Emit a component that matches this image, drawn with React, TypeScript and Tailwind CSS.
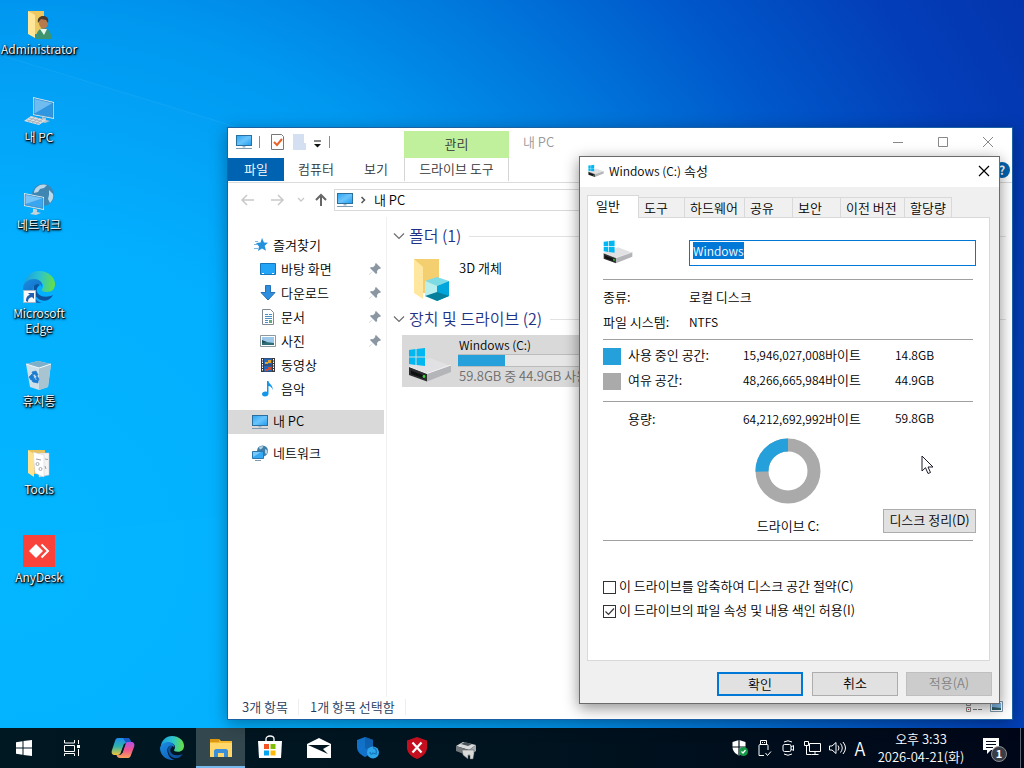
import { useEffect, useRef, useState } from 'react';
import type { ReactNode } from 'react';
import clsx from 'clsx';

type IconProps = { className?: string };

const MonitorIcon = ({ className }: IconProps) => (
  <svg viewBox="0 0 16 16" className={className} aria-hidden="true">
    <defs>
      <linearGradient id="screen" x1="0" y1="0" x2="1" y2="1">
        <stop offset="0" stopColor="#2aa5f5" />
        <stop offset="0.5" stopColor="#6cc4fb" />
        <stop offset="1" stopColor="#1e9cf0" />
      </linearGradient>
    </defs>
    <rect x="0.5" y="1.5" width="15" height="10" fill="url(#screen)" stroke="#2b6f9f" />
    <path d="M6.5 12h3v1.5h-3z" fill="#9fb4c4" />
    <path d="M0 14.5h16" stroke="#7f9bb0" strokeWidth="1" />
  </svg>
);

const NetworkIcon = ({ className }: IconProps) => (
  <svg viewBox="0 0 32 32" className={className} aria-hidden="true">
    <circle cx="20" cy="12" r="11" fill="#3f86b2" />
    <path d="M14 4c3-3 7-3 10-2l-3 3-4 1-2 3-4 1c0-3 1-4 3-6zM26 7l4 4c1 4-1 7-3 9l-2-4 1-4z" fill="#b9d9ea" />
    <path d="M1 10l20 4v13L1 23z" fill="#e3edf4" />
    <path d="M2 11.500l18 3.500v10.500L2 22z" fill="#3aa6ef" stroke="#2f78ab" strokeWidth="0.600" />
    <path d="M2.500 12l17 3.300L2.500 21z" fill="#77c4f8" />
    <path d="M10 25.500l4 1V29l4 1-5 2-6-1 3-2z" fill="#c7d1d8" />
  </svg>
);

const NetworkSmallIcon = ({ className }: IconProps) => (
  <svg viewBox="0 0 16 16" className={className} aria-hidden="true">
    <circle cx="10.500" cy="6" r="5.500" fill="#3d7fa8" />
    <path d="M7 2.500c1.500-1.500 3-1.500 4.500-1L10 3.500l-2 1zM13 4l2.500 1.500c0 2-.500 3-1.500 4l-1-2z" fill="#b5d5e6" />
    <path d="M.500 6.500h11v7H.500z" fill="#35a9f4" stroke="#2a78ae" />
    <path d="M1 7h8l-8 5z" fill="#79c8fa" />
    <path d="M3 15.500h6" stroke="#7f9bb0" />
  </svg>
);

const DriveIcon = ({ className }: IconProps) => (
  <svg viewBox="0 0 44 34" className={className} aria-hidden="true">
    <path d="M1 18l21-8 21 8-24 8z" fill="#e1e1e3" />
    <path d="M1 18.500l18 7v8L1 27z" fill="#2b2d2f" />
    <path d="M19 25.500l24-8.500v7l-24 9.500z" fill="#b4b5b8" />
    <path d="M1 18.500l18 7 24-8.500" fill="none" stroke="#f4f4f4" />
    <path d="M3 22.500l13 5v3L3 26z" fill="#101112" />
    <circle cx="16" cy="28.500" r="1.400" fill="#3fd43f" />
    <path d="M1 2l6.500-.900V8.500H1zM8.500 1L17 0v8.500H8.500zM1 9.500h6.500v7.400L1 16zM8.500 9.500H17V18l-8.500-1z" fill="#00b7f1" />
  </svg>
);

const UserFolderIcon = ({ className }: IconProps) => (
  <svg viewBox="0 0 32 32" className={className} aria-hidden="true">
    <path d="M5 4h16v23H9z" fill="#edc75f" />
    <path d="M5 4l7 4v23l-7-4z" fill="#ffe699" />
    <path d="M13 32c0-7 3-11 8-11 4 0 7 4 8 11z" fill="#3f9470" />
    <path d="M17 22l4 6 3-6z" fill="#e9f5ef" />
    <ellipse cx="20.500" cy="16" rx="4.500" ry="5.500" fill="#b57a4d" />
    <path d="M15 16c-1-5 2-7 5-7 4 0 6 2 5 7l-2-3-5-1z" fill="#49382e" />
  </svg>
);

const DesktopPcIcon = ({ className }: IconProps) => (
  <svg viewBox="0 0 32 32" className={className} aria-hidden="true">
    <path d="M10 2l21 5v17l-21-4z" fill="#dcecf7" />
    <path d="M11 3.500L30 8v14.500L11 19z" fill="#2f97e2" stroke="#3b7fae" strokeWidth="0.600" />
    <path d="M11.500 4L29 8.200 11.500 18.500z" fill="#6fbcf1" />
    <path d="M19 22l4 1v2l4 1-5 2-7-2 4-1z" fill="#b6c2ca" />
    <path d="M8 21l15 4-7 5-15-4z" fill="#d9dfe3" />
    <path d="M6 23l13 3.500M4 25l13 3.500M12 22l-7 5M16 23l-7 5M20 24l-7 5" stroke="#98a4ad" strokeWidth="0.700" />
  </svg>
);

const EdgeIcon = ({ className, shortcut }: IconProps & { shortcut?: boolean }) => (
  <svg viewBox="0 0 32 32" className={className} aria-hidden="true">
    <defs>
      <linearGradient id="edgeTop" x1="0" y1="0.300" x2="1" y2="0.400">
        <stop offset="0" stopColor="#1b9fde" />
        <stop offset="0.500" stopColor="#2cc4cf" />
        <stop offset="1" stopColor="#66df45" />
      </linearGradient>
      <linearGradient id="edgeSide" x1="0" y1="0" x2="0.600" y2="1">
        <stop offset="0" stopColor="#1a8ee0" />
        <stop offset="1" stopColor="#1165c1" />
      </linearGradient>
    </defs>
    <path d="M1 14C2 6 8 0 16 0c9 0 16 6 16 13 0 5-3 8-8 8-4 0-6-1-5-3 3-3 0-9-6-9C8 9 3 11 1 14z" fill="url(#edgeTop)" />
    <path d="M0 16c1-5 6-8 11-8 6 0 9 4 8 8-1-2-2-3-4-3-4 0-6 4-5 8 1 6 5 10 9 11C9 33 0 26 0 16z" fill="url(#edgeSide)" />
    <path d="M11 15c-2 9 5 17 14 14 2-1 4-3 5-5-6 3-14 2-16-3-1-3 1-6 3-7-2-2-5-1-6 1z" fill="#0d529e" />
    {shortcut && (
      <>
        <path d="M0.500 19.500h12v12h-12z" fill="#f7f8fa" stroke="#a9b7c4" />
        <path d="M3 30c0-4 2-6 4-6l-2-2h6v6l-2-2c-3 1-4 2-4 5z" fill="#1f5fae" />
      </>
    )}
  </svg>
);

const RecycleBinIcon = ({ className }: IconProps) => (
  <svg viewBox="0 0 32 32" className={className} aria-hidden="true">
    <path d="M3 5l12-3 13 3-3 23-9 3-9-3z" fill="#cddfe8" />
    <path d="M3 5l12-3 13 3-12 4z" fill="#7fb0ca" />
    <path d="M16 9l12-4-3 23-9 3z" fill="#a9c4d1" />
    <path d="M3 5l13 4 12-4" fill="none" stroke="#eef7fb" />
    <path d="M9 13l4-1 2 4-2 1-1-2-2 1zM6 18l3-3 2 3-1 3H8zM10 23l5 1v-3h-3v-2l-3 3zM14 17l2 3-1 2-2-3z" fill="#1b7bd0" stroke="#1b7bd0" strokeWidth="0.700" />
  </svg>
);

const ToolsFolderIcon = ({ className }: IconProps) => (
  <svg viewBox="0 0 32 32" className={className} aria-hidden="true">
    <path d="M5 3h17v24H9z" fill="#e6c15c" />
    <path d="M16 6h10v22l-10 2z" fill="#f4f4f4" stroke="#c9c9c9" strokeWidth="0.500" />
    <path d="M10 5l11 3v22l-9-4z" fill="#fff" stroke="#ccc" strokeWidth="0.500" />
    <path d="M13 12l5 1M22 12l3 .5M22 19l1 3" stroke="#9aa1a8" fill="none" />
    <circle cx="14.500" cy="17" r="1.500" fill="none" stroke="#a5abb1" />
    <circle cx="17.500" cy="22" r="1.500" fill="none" stroke="#a5abb1" />
    <path d="M5 3l6 4v23l-6-4z" fill="#ffe391" />
  </svg>
);

const AnyDeskIcon = ({ className }: IconProps) => (
  <svg viewBox="0 0 32 32" className={className} aria-hidden="true">
    <path d="M0 0h32v32H0z" fill="#f9423a" />
    <path d="M13 9l7 7-7 7-7-7z" fill="#fff" />
    <path d="M18.500 9.500l6.500 6.500-6.500 6.500" fill="none" stroke="#fff" strokeWidth="2" />
  </svg>
);

const ThreeDFolderIcon = ({ className }: IconProps) => (
  <svg viewBox="0 0 38 44" className={className} aria-hidden="true">
    <path d="M1 1h25v34H9z" fill="#f3cf70" />
    <path d="M1 1l9 8v32l-9-6z" fill="#ffe79f" />
    <path d="M12 23l12-4 12 4-12 5z" fill="#7cdbe4" />
    <path d="M12 23l12 5v15l-12-5z" fill="#b7f0ef" />
    <path d="M24 28l12-5v15l-12 5z" fill="#00a5dc" />
    <path d="M12 38l12-4 12 4-12 5z" fill="#067f9c" />
  </svg>
);

const PinIcon = () => (
  <svg viewBox="0 0 12 12" className="size-3" aria-hidden="true">
    <path d="M7 0l5 5-1 1-1-.3L8 8l.2 2L7 11 4 8 .500 11.500 0 12l.500-1L4 8 1 5l1-1 2 .2L6.300 2 6 1z" fill="#8a97a3" />
  </svg>
);

const StarIcon = () => (
  <svg viewBox="0 0 14 14" className="size-3.5" aria-hidden="true">
    <path d="M8 0l2 4.500 4 .300-3.300 3 1.300 5L8 10.500 4 13l1-4.500L2 5l4.500-.500z" fill="#2391dc" />
    <path d="M1 3.500h3M0 6.500h3M0 10.500h4" stroke="#7ab8e4" />
  </svg>
);

const ScreenIcon = () => (
  <svg viewBox="0 0 16 16" className="size-4" aria-hidden="true">
    <path d="M0.500 2.500h15v11H0.500z" fill="#22a5f7" stroke="#1677bd" />
    <path d="M2 12.500h2M12 12.500h2" stroke="#fff" />
  </svg>
);

const DownloadIcon = () => (
  <svg viewBox="0 0 16 16" className="size-4" aria-hidden="true">
    <path d="M5.500.500h5v7h4.500L8 15 1 7.500h4.500z" fill="#2f8fdf" stroke="#2473b8" />
  </svg>
);

const DocumentIcon = () => (
  <svg viewBox="0 0 16 16" className="size-4" aria-hidden="true">
    <path d="M2.500.500h8l3 3v12h-11z" fill="#fff" stroke="#808a92" />
    <path d="M5 5.500h3M9 5.500h3M5 7.500h7M5 9.500h7M5 11.500h3M5 13.500h3" stroke="#4a8fc4" />
    <path d="M9 11h3v3H9z" fill="#5fae7d" />
  </svg>
);

const PictureIcon = () => (
  <svg viewBox="0 0 16 16" className="size-4" aria-hidden="true">
    <path d="M0.500 2.500h15v11H0.500z" fill="#fff" stroke="#8d979e" />
    <path d="M2 4h12v8H2z" fill="#9cc9ea" />
    <path d="M2 8l4 1 8 1v2H2z" fill="#2f6d77" />
    <path d="M2 7l5 2-5 1z" fill="#1f4f59" />
  </svg>
);

const VideoIcon = () => (
  <svg viewBox="0 0 16 16" className="size-4" aria-hidden="true">
    <path d="M1 1h14v14H1z" fill="#3a3a3e" />
    <path d="M2.500 2v12M13.500 2v12" stroke="#fff" strokeDasharray="1.500 1" />
    <path d="M4 1.500h8v6H4zM4 8.500h8v6H4z" fill="#2666b8" />
    <path d="M5 5h3v2H5zM8 3h3v3H8z" fill="#e3a22b" />
    <path d="M5 12h3v2H5zM8 10h3v3H8z" fill="#c94f3c" />
  </svg>
);

const MusicIcon = () => (
  <svg viewBox="0 0 16 16" className="size-4" aria-hidden="true">
    <path d="M7 0h1.500c0 3 5 4 4 9-1-3-2-4-4-4v7.500c0 2-1.500 3-3.500 3S2 14.500 2 13c0-2 3-3 5-2z" fill="#1496e8" />
  </svg>
);

const desktopItems: { label: string; icon: ReactNode }[] = [
  { label: 'Administrator', icon: <UserFolderIcon className="size-8" /> },
  { label: '내 PC', icon: <DesktopPcIcon className="size-8" /> },
  { label: '네트워크', icon: <NetworkIcon className="size-8" /> },
  { label: 'Microsoft Edge', icon: <EdgeIcon className="size-8" shortcut /> },
  { label: '휴지통', icon: <RecycleBinIcon className="size-8" /> },
  { label: 'Tools', icon: <ToolsFolderIcon className="size-8" /> },
  { label: 'AnyDesk', icon: <AnyDeskIcon className="size-8" /> },
];

const quickAccess: { label: string; icon: ReactNode; pinned: boolean }[] = [
  { label: '바탕 화면', icon: <ScreenIcon />, pinned: true },
  { label: '다운로드', icon: <DownloadIcon />, pinned: true },
  { label: '문서', icon: <DocumentIcon />, pinned: true },
  { label: '사진', icon: <PictureIcon />, pinned: true },
  { label: '동영상', icon: <VideoIcon />, pinned: false },
  { label: '음악', icon: <MusicIcon />, pinned: false },
];

const tabs = [
  { label: '일반', width: 'w-[52px]' },
  { label: '도구', width: 'w-[46px]' },
  { label: '하드웨어', width: 'w-[60px]' },
  { label: '공유', width: 'w-[48px]' },
  { label: '보안', width: 'w-[48px]' },
  { label: '이전 버전', width: 'w-[64px]' },
  { label: '할당량', width: 'w-[47px]' },
];

function DesktopIcons() {
  return (
    <nav className="flex w-[78px] flex-col pt-[7px]" aria-label="바탕 화면">
      {desktopItems.map((item) => (
        <button key={item.label} className="flex h-[88px] flex-col items-center gap-0.5">
          {item.icon}
          <span className="px-2 text-center text-xs leading-[15px] text-white [text-shadow:1px_1px_1px_#000,1px_1px_3px_#000,0_1px_2px_#000]">
            {item.label}
          </span>
        </button>
      ))}
    </nav>
  );
}

function GroupHeader({ title }: { title: string }) {
  return (
    <h2 className="flex h-6 items-center gap-1 text-base font-[350] text-[#1e3287]">
      <svg viewBox="0 0 12 12" className="size-3" aria-hidden="true">
        <path d="M1 3.500l5 5 5-5" fill="none" stroke="#6d6d6d" strokeWidth="1.200" />
      </svg>
      <span className="pb-0.5">{title}</span>
      <span className="ml-1 h-px flex-1 bg-[#e2e2e2]" />
    </h2>
  );
}

function Explorer() {
  return (
    <section className="absolute bottom-2 left-[227px] right-[11px] top-[127px] flex flex-col border border-[#1b62a5] bg-white shadow-[0_4px_16px_rgba(0,0,0,0.35)]">
      <header className="flex h-[30px] shrink-0 items-center">
        <div className="flex w-[176px] items-center pb-0.5 pl-2">
          <MonitorIcon className="size-4" />
          <span className="mx-[7px] h-3 w-px bg-[#8a8a8a]" />
          <svg viewBox="0 0 16 16" className="ml-[3px] size-4" aria-hidden="true">
            <path d="M1.500.500h10l2 2v13h-12z" fill="#fff" stroke="#777" />
            <path d="M4 8l3 3 5-6" fill="none" stroke="#e8632a" strokeWidth="2" />
          </svg>
          <svg viewBox="0 0 16 16" className="ml-1.5 size-4" aria-hidden="true">
            <path d="M1 0h11v9h2v7H1z" fill="#d5dff2" />
          </svg>
          <svg viewBox="0 0 9 8" className="ml-[5px] mt-1 h-2 w-[9px]" aria-hidden="true">
            <path d="M1 1h7" stroke="#111" />
            <path d="M1 4h7L4.500 7.500z" fill="#111" />
          </svg>
          <span className="ml-[7px] h-3 w-px bg-[#8a8a8a]" />
        </div>
        <div className="flex h-[27px] w-[105px] items-center justify-center self-end bg-[#c1f09d] pb-0.5 text-[13px] text-[#333]">관리</div>
        <h1 className="flex-1 pb-0.5 pl-3.5 text-[13px] font-[350] text-[#999]">내 PC</h1>
        <div className="flex gap-[21px] pb-0.5 pr-3 text-[#888]">
          <button aria-label="최소화">
            <svg viewBox="0 0 24 12" className="h-3 w-6"><path d="M7 6.500h10" stroke="currentColor" /></svg>
          </button>
          <button aria-label="최대화">
            <svg viewBox="0 0 24 12" className="h-3 w-6"><path d="M7.500 1.500h9v9h-9z" fill="none" stroke="currentColor" /></svg>
          </button>
          <button aria-label="닫기">
            <svg viewBox="0 0 24 12" className="h-3 w-6"><path d="M7 1l10 10M17 1L7 11" stroke="currentColor" /></svg>
          </button>
        </div>
      </header>

      <div className="flex h-[25px] shrink-0 items-start border-b border-[#dadbdc] text-[13px] text-[#333]">
        <button className="h-[23px] w-[56px] bg-[#0063b1] pb-0.5 text-white">파일</button>
        <button className="h-[23px] w-[64px] pb-0.5">컴퓨터</button>
        <button className="h-[23px] w-[56px] pb-0.5">보기</button>
        <button className="h-[23px] w-[105px] border-x border-[#d5d5d5] pb-0.5">드라이브 도구</button>
        <span className="ml-auto mr-0.5 mt-1 flex size-4 items-center justify-center rounded-full bg-[#0063b1] text-xs font-bold text-white">?</span>
      </div>

      <div className="flex h-[34px] shrink-0 items-center">
        <div className="flex w-[106px] items-center pl-[13px]">
          <svg viewBox="0 0 88 14" className="h-3.5 w-[88px]" fill="none" aria-hidden="true">
            <path d="M13 7H1M6 2L1 7l5 5M30 7h12M37 2l5 5-5 5" stroke="#c9c9c9" strokeWidth="1.500" />
            <path d="M57 5l3 3 3-3" stroke="#c9c9c9" strokeWidth="1.300" />
            <path d="M80 13V2M75 7l5-5 5 5" stroke="#666" strokeWidth="2" />
          </svg>
        </div>
        <div className="flex h-[22px] flex-1 items-center border border-[#d9d9d9] pl-0.5 text-[13px]">
          <MonitorIcon className="size-4" />
          <svg viewBox="0 0 8 8" className="mx-1.5 size-2" aria-hidden="true">
            <path d="M2.500 1l3 3-3 3" fill="none" stroke="#555" strokeWidth="1.500" />
          </svg>
          <span className="pb-px pl-px">내 PC</span>
        </div>
        <span className="w-6" />
      </div>

      <div className="flex min-h-0 flex-1">
        <aside className="w-[159px] shrink-0 border-r border-[#f0f0f0] pr-[2px] pt-4 text-[13px]">
          <div className="flex h-6 items-center gap-[5px] pl-[26px]">
            <StarIcon />
            즐겨찾기
          </div>
          <ul>
            {quickAccess.map((item) => (
              <li key={item.label} className="flex h-6 items-center gap-[5px] pl-8 pr-[3px]">
                {item.icon}
                <span className="flex-1">{item.label}</span>
                {item.pinned && <PinIcon />}
              </li>
            ))}
          </ul>
          <div className="mt-[9px] flex h-6 items-center gap-[5px] bg-[#d9d9d9] pl-6">
            <MonitorIcon className="size-4" />
            <span className="pb-0.5">내 PC</span>
          </div>
          <div className="mt-[7px] flex h-6 items-center gap-[5px] pl-6">
            <NetworkSmallIcon className="size-4" />
            네트워크
          </div>
        </aside>

        <main className="min-w-0 flex-1 pl-[6px] pr-1.5 pt-[7px]">
          <GroupHeader title="폴더 (1)" />
          <button className="ml-[9px] flex h-[59px] items-start gap-2 pl-[11px] pt-2.5 text-left text-[13px]">
            <ThreeDFolderIcon className="h-11 w-[38px]" />
            <span className="leading-5">3D 개체</span>
          </button>
          <GroupHeader title="장치 및 드라이브 (2)" />
          <button className="ml-[9px] mt-1 flex h-[52px] w-[250px] items-center gap-1.5 bg-[#d9d9d9] pl-1.5 text-left">
            <DriveIcon className="mt-2 h-[34px] w-11 shrink-0" />
            <span className="flex-1 pb-0.5 pr-1">
              <span className="block pl-px text-xs leading-[18px]">Windows (C:)</span>
              <span className="flex h-[13px] border border-l-0 border-[#bcbcbc] bg-[#e6e6e6]">
                <span className="w-1/4 bg-[#26a0da]" />
              </span>
              <span className="block pl-px text-[13px] leading-[18px] text-[#6d6d6d]">59.8GB 중 44.9GB 사용 가능</span>
            </span>
          </button>
        </main>
      </div>

      <footer className="flex h-[22px] shrink-0 items-center pb-0.5 pl-3.5 pr-2 text-[13px] text-[#1e395b]">
        <span className="w-[57px] border-r border-[#eee] leading-4">3개 항목</span>
        <span className="ml-[11px] border-r border-[#eee] pr-2.5 leading-4">1개 항목 선택함</span>
        <svg viewBox="0 0 38 12" className="ml-auto h-3 w-[38px]" aria-hidden="true">
          <path d="M.500.500h4v4h-4zM.500 6.500h4v4h-4z" fill="#fff" stroke="#888" />
          <path d="M7 2.500h4M12 2.500h4M7 8.500h4M12 8.500h4" stroke="#777" />
          <path d="M2 2h1v1H2z" fill="#2b7fc4" />
          <path d="M2 8h1v1H2z" fill="#c33" />
          <path d="M24.500.500h12v10h-12z" fill="#fff" stroke="#7b95a8" />
          <path d="M26 2h9v7h-9z" fill="#7db6e3" />
          <path d="M26 6l9 1v2h-9z" fill="#2f5f6c" />
        </svg>
      </footer>
    </section>
  );
}

function SizeCells({ label, bytes, size }: { label: string; bytes: string; size: string }) {
  return (
    <>
      <th scope="row" className="p-0 pb-[3px] font-[350]">{label}</th>
      <td className="p-0 pb-[3px] text-right">
        <span className="text-xs">{bytes}</span>바이트
      </td>
      <td className="p-0 pb-[3px] text-right text-xs">{size}</td>
      <td />
    </>
  );
}

function PropertiesDialog() {
  const [activeTab, setActiveTab] = useState('일반');
  const nameRef = useRef<HTMLInputElement>(null);

  useEffect(() => {
    nameRef.current?.focus();
    nameRef.current?.select();
  }, []);

  return (
    <section
      role="dialog"
      aria-label="Windows (C:) 속성"
      className="absolute bottom-6 left-[579px] right-6 top-[156px] flex flex-col border border-[#6b6b6b] bg-[#f0f0f0] text-[13px] text-black shadow-[0_4px_14px_rgba(0,0,0,0.45)]"
    >
      <header className="flex h-[30px] shrink-0 items-center bg-white pb-0.5 pl-2 pr-[9px]">
        <DriveIcon className="h-4 w-4" />
        <h1 className="flex-1 pl-[5px] font-[350]">
          <span className="text-xs">Windows (C:)</span> 속성
        </h1>
        <button aria-label="닫기">
          <svg viewBox="0 0 12 12" className="size-3">
            <path d="M1 1l10 10M11 1L1 11" stroke="#000" strokeWidth="1.200" />
          </svg>
        </button>
      </header>

      <div role="tablist" className="mt-2 flex h-[22px] shrink-0 items-end pl-[7px]">
        {tabs.map((tab) => (
          <button
            key={tab.label}
            role="tab"
            aria-selected={activeTab === tab.label}
            onClick={() => setActiveTab(tab.label)}
            className={clsx(
              'shrink-0 whitespace-nowrap border-r border-t border-[#d9d9d9] text-left',
              tab.width,
              activeTab === tab.label ? 'z-10 -mb-px h-[23px] border-l bg-white pb-1 pl-2' : 'h-5 pb-0.5 pl-[5px]',
            )}
          >
            {tab.label}
          </button>
        ))}
      </div>

      <div className="ml-[7px] mr-[9px] flex-1 border border-[#d9d9d9] bg-white pl-[15px] pr-[13px]">
        <div className="mr-[3px] flex h-[62px] items-center border-b border-[#a0a0a0] pb-0.5">
          <DriveIcon className="mt-2 h-6 w-[30px]" />
          <input
            ref={nameRef}
            aria-label="볼륨 이름"
            defaultValue="Windows"
            className="-mr-[3px] mb-[-10px] ml-14 h-[26px] min-w-0 flex-1 border border-[#0078d7] bg-white pb-1 pl-[3px] text-xs outline-none selection:bg-[#0078d7] selection:text-white"
          />
        </div>

        <dl className="mr-[3px] grid grid-cols-[86px_1fr] border-b border-[#a0a0a0] pb-[5px] pt-1 leading-[25px]">
          <dt>종류:</dt>
          <dd>로컬 디스크</dd>
          <dt>파일 시스템:</dt>
          <dd className="text-xs leading-[25px]">NTFS</dd>
        </dl>

        <table className="mt-1 w-[370px] table-fixed border-collapse text-left">
          <colgroup>
            <col className="w-[25px]" />
            <col className="w-[95px]" />
            <col className="w-[138px]" />
            <col className="w-[73px]" />
            <col />
          </colgroup>
          <tbody>
            <tr className="h-[25px]">
              <td className="p-0"><span className="block h-[17px] w-[18px] bg-[#26a0da]" /></td>
              <SizeCells label="사용 중인 공간:" bytes="15,946,027,008" size="14.8GB" />
            </tr>
            <tr className="h-[25px]">
              <td className="p-0"><span className="block h-[17px] w-[18px] bg-[#aaaaaa]" /></td>
              <SizeCells label="여유 공간:" bytes="48,266,665,984" size="44.9GB" />
            </tr>
            <tr className="h-[7px]"><td colSpan={5} className="p-0" /></tr>
            <tr className="h-[37px] border-t border-[#a0a0a0]">
              <td />
              <SizeCells label="용량:" bytes="64,212,692,992" size="59.8GB" />
            </tr>
          </tbody>
        </table>

        <div className="mr-[3px] flex h-[103px] border-b border-[#a0a0a0]">
          <span className="flex-1" />
          <div className="flex w-[86px] flex-col items-center">
            <svg viewBox="0 0 66 66" className="size-[66px]" aria-hidden="true">
              <circle cx="33" cy="33" r="26" fill="none" stroke="#aaaaaa" strokeWidth="13" />
              <path d="M7 33.500A26 26 0 0 1 33 7" fill="none" stroke="#26a0da" strokeWidth="13" />
            </svg>
            <span className="mt-3 whitespace-nowrap leading-5">드라이브 C:</span>
          </div>
          <div className="flex flex-1 items-end justify-end pb-[7px]">
            <button className="-mr-[3px] h-6 w-[93px] whitespace-nowrap border border-[#adadad] bg-[#e1e1e1] pb-0.5">디스크 정리(D)</button>
          </div>
        </div>

        <div className="pt-[34px]">
          <label className="flex h-6 items-center gap-[3px]">
            <input type="checkbox" className="size-[13px] appearance-none border border-[#333] bg-white" />
            <span className="pb-0.5">이 드라이브를 압축하여 디스크 공간 절약(C)</span>
          </label>
          <label className="relative flex h-6 items-center gap-[3px]">
            <input type="checkbox" defaultChecked className="peer size-[13px] appearance-none border border-[#333] bg-white" />
            <svg viewBox="0 0 13 13" className="pointer-events-none absolute left-0 hidden size-[13px] peer-checked:block" aria-hidden="true">
              <path d="M2.500 6.500l3 3 5.500-6" fill="none" stroke="#333" strokeWidth="1.200" />
            </svg>
            <span className="pb-0.5">이 드라이브의 파일 속성 및 내용 색인 허용(I)</span>
          </label>
        </div>
      </div>

      <footer className="flex h-[42px] shrink-0 items-center justify-end gap-2 pr-[7px] pt-1">
        <button className="h-6 w-[86px] border-2 border-[#0078d7] bg-[#e1e1e1] pb-0.5">확인</button>
        <button className="ml-px h-6 w-[86px] border border-[#adadad] bg-[#e1e1e1] pb-0.5">취소</button>
        <button disabled className="h-6 w-[86px] border border-[#bfbfbf] bg-[#cccccc] pb-0.5 text-[#838383]">적용(A)</button>
      </footer>

      {/* mouse pointer */}
      <svg viewBox="0 0 13 20" className="pointer-events-none absolute left-[341px] top-[298px] h-5 w-[13px]" aria-hidden="true">
        <path d="M1 1v15l3.500-3.300L7 18.500l2.500-1-2.500-5.500h5z" fill="#fff" stroke="#1c1c28" />
      </svg>
    </section>
  );
}

function TaskButton({ label, children, active }: { label: string; children: ReactNode; active?: boolean }) {
  return (
    <button
      aria-label={label}
      className={clsx(
        'flex h-full w-[49px] items-center justify-center',
        active && 'border-b-2 border-[#76b9ed] bg-[#33474f] pt-0.5',
      )}
    >
      {children}
    </button>
  );
}

function Taskbar() {
  return (
    <footer className="flex h-10 shrink-0 items-center bg-linear-to-r from-[#001822] via-[#001420] to-[#000718] text-white">
      <TaskButton label="시작">
        <svg viewBox="0 0 16 16" className="mr-px size-4">
          <path d="M0 2.200L6.500 1.300v6.200H0zM7.500 1.100L16 0v7.500H7.500zM0 8.500h6.500v6.200L0 13.800zM7.500 8.500H16V16l-8.500-1.100z" fill="#fff" />
        </svg>
      </TaskButton>
      <TaskButton label="작업 보기">
        <svg viewBox="0 0 18 16" className="ml-[-4px] h-4 w-[18px]" fill="none" stroke="#fff">
          <path d="M1.500 0v3h10V0M1.500 5.500h10v6h-10zM1.500 16v-2.500h10V16M15.500 0v4M15.500 9v7" />
          <path d="M14 5h3v3h-3z" fill="#fff" stroke="none" />
        </svg>
      </TaskButton>
      <TaskButton label="Copilot">
        <svg viewBox="0 0 24 24" className="size-6">
          <defs>
            <linearGradient id="copA" x1="0" y1="0" x2="0" y2="1">
              <stop offset="0" stopColor="#1b8df0" />
              <stop offset="0.500" stopColor="#2fb4a8" />
              <stop offset="1" stopColor="#f3c63a" />
            </linearGradient>
            <linearGradient id="copB" x1="0" y1="0" x2="0" y2="1">
              <stop offset="0" stopColor="#b252e8" />
              <stop offset="0.500" stopColor="#f0538c" />
              <stop offset="1" stopColor="#fba35a" />
            </linearGradient>
          </defs>
          <path d="M7 2h9c2 0 3 1 3.500 3l.5 2h-4c-2 0-3 .5-3.500 2.500L10 16c-.500 2-1.500 3-3.500 3H4c-3 0-4-2-3-5l3-9c.500-2 1.500-3 3-3z" fill="url(#copA)" />
          <path d="M12 2h4c2 0 3 1 3.500 3l.500 2h-5z" fill="#1657c9" />
          <path d="M17 22H9c-2 0-3-1-3.500-3H8c2 0 3-1 3.500-3L14 9c.500-2 1.500-3 3-3h3c3 0 4 2 3 5l-3 8c-.500 2-1.500 3-3 3z" fill="url(#copB)" />
          <path d="M13 8l-3 9h1.500l3-9z" fill="#001620" />
        </svg>
      </TaskButton>
      <TaskButton label="Microsoft Edge"><EdgeIcon className="size-6" /></TaskButton>
      <TaskButton label="파일 탐색기" active>
        <svg viewBox="0 0 22 18" className="h-[18px] w-[22px]">
          <path d="M0 0h9l2 2h11v16H0z" fill="#f5ba2d" />
          <path d="M0 0h9v3H0z" fill="#dd9612" />
          <path d="M0 4h22v14H0z" fill="#ffd76b" />
          <path d="M4 18v-6c0-1 1-2 2-2h10c1 0 2 1 2 2v6h-4v-4H8v4z" fill="#3a8fd8" />
        </svg>
      </TaskButton>
      <TaskButton label="Microsoft Store">
        <svg viewBox="0 0 24 24" className="mb-0.5 size-6">
          <path d="M8 7V4c0-4 8-4 8 0v3" fill="none" stroke="#fff" strokeWidth="1.300" />
          <path d="M0 6h24l-1 17H1z" fill="#fff" />
          <path d="M6 9h5v5H6z" fill="#f35325" />
          <path d="M12.500 9h5v5h-5z" fill="#81bc06" />
          <path d="M6 15.500h5v5H6z" fill="#05a6f0" />
          <path d="M12.500 15.500h5v5h-5z" fill="#ffba08" />
        </svg>
      </TaskButton>
      <TaskButton label="메일">
        <svg viewBox="0 0 24 20" className="h-5 w-6">
          <path d="M0 6l12-6 12 6v14H0z" fill="#fff" />
          <path d="M1 7h22l-7 4 5 5L1 7z" fill="#001620" />
        </svg>
      </TaskButton>
      <TaskButton label="보안">
        <svg viewBox="0 0 24 24" className="size-6">
          <path d="M9 1l8 3v7c0 5-4 8-8 10-4-2-8-5-8-10V4z" fill="#1272c9" />
          <path d="M9 1l8 3v7l-8 2z" fill="#0f60ae" />
          <circle cx="17" cy="16.500" r="6" fill="#2ea5e9" />
          <path d="M17 12c3 0 4 3 3 6l-3-1c-1 2-3 1-3-1" fill="none" stroke="#1677c0" strokeWidth="1.300" />
        </svg>
      </TaskButton>
      <TaskButton label="차단">
        <svg viewBox="0 0 22 24" className="h-6 w-[22px]">
          <path d="M11 1l10 3.500V12c0 5-5 9-10 11C6 21 1 17 1 12V4.500z" fill="#c50f1f" />
          <path d="M6.500 6.500l9 10M15.500 6.500l-9 10" stroke="#fff" strokeWidth="2.200" />
        </svg>
      </TaskButton>
      <TaskButton label="장치">
        <svg viewBox="0 0 22 20" className="mt-1 h-5 w-[22px]">
          <path d="M1 6l7-4 13 3-7 5z" fill="#d7d9db" />
          <path d="M6 4l4-2 7 2-4 2z" fill="#4a5258" />
          <path d="M1 6l13 4v6L1 11z" fill="#73787c" />
          <path d="M14 10l7-5v6l-7 5z" fill="#a5a9ac" />
          <path d="M7 10h12v4l-1 5h-3v-4h-2v4l-5-4z" fill="#dadada" stroke="#555" strokeWidth="0.500" />
        </svg>
      </TaskButton>

      <div className="ml-auto flex h-full items-center">
        <div className="flex items-center gap-2">
          <svg viewBox="0 0 16 16" className="size-4" aria-hidden="true">
            <path d="M7 0l6.500 2v5c0 4-3 7-6.500 8.500C3.500 14 .500 11 .500 7V2z" fill="#fff" />
            <path d="M7 0v15M0 7h14" stroke="#001018" strokeWidth="1.200" />
            <circle cx="11.500" cy="11.500" r="4.500" fill="#149647" />
            <path d="M9.500 11.500l1.500 1.500 2.500-3" fill="none" stroke="#fff" strokeWidth="1.200" />
          </svg>
          <svg viewBox="0 0 16 16" className="size-4" fill="none" stroke="#fff" aria-hidden="true">
            <path d="M4.500 4.500v-4h6v4M3 15.500V5.500q0-1 1-1h7q1 0 1 1V10M3 15.500h5M6.500 2v1M8.500 2v1M9.500 13l2 2.500 3.500-4" />
          </svg>
          <svg viewBox="0 0 16 16" className="size-4" fill="none" stroke="#fff" aria-hidden="true">
            <path d="M4 2q4-2.500 8 0M4 14q4 2.500 8 0M3 6q0-1.500 1.500-1.500h5q1.500 0 1.500 1.500v4q0 1.500-1.500 1.500h-5Q3 11.500 3 10zM11 7l2.500-1.500v5L11 9" />
          </svg>
          <svg viewBox="0 0 17 16" className="h-4 w-[17px]" fill="none" stroke="#fff" aria-hidden="true">
            <path d="M5.500 3.500h11v8h-11zM11 12v3M7.500 14.500h7M.500 1.500h4v4h-4zM2.500 6v8.500h5" />
          </svg>
          <svg viewBox="0 0 17 16" className="h-4 w-[17px]" fill="none" stroke="#fff" aria-hidden="true">
            <path d="M.500 6v4H3l4 3.500v-11L3 6zM9 5.500q2 2.500 0 5M11.500 3.500q3.500 4.500 0 9M14 2q5 6 0 12" />
          </svg>
          <span className="w-3 text-center text-lg leading-5">A</span>
        </div>
        <div className="w-[110px] text-center text-[13px] leading-[18px]">
          <div>오후 3:33</div>
          <div>2026-04-21(화)</div>
        </div>
        <button aria-label="알림 1개" className="w-[44px] pl-[7px]">
          <svg viewBox="0 0 26 24" className="mt-1 h-6 w-[26px]">
            <path d="M0 0h16v12H8l-4 4v-4H0z" fill="#fff" />
            <path d="M3 3.500h10M3 6.500h10M3 9.500h7" stroke="#000a18" />
            <circle cx="16" cy="16" r="7.500" fill="#3a3d44" stroke="#8a8d92" />
            <text x="16" y="20" textAnchor="middle" fontSize="11" fontWeight="bold" fill="#fff">1</text>
          </svg>
        </button>
        <span className="mr-[3px] h-full w-px bg-[#5d6470]" />
      </div>
    </footer>
  );
}

export default function App() {
  return (
    <div className="flex h-screen flex-col overflow-hidden font-['Noto_Sans_CJK_KR','Noto_Sans',sans-serif] font-[350]">
      <div className="relative min-h-0 flex-1 bg-[radial-gradient(ellipse_115%_150%_at_0%_75%,#00b7ff_0%,#00aeff_30%,#0098f0_49%,#0078dc_63%,#0058ca_76%,#033fb9_89%,#0335ae_100%)]">
        <svg viewBox="0 0 1024 728" preserveAspectRatio="none" className="absolute inset-0 size-full" aria-hidden="true">
          <path d="M0 55L240 128V728H0z" fill="#2ab8ff" opacity="0.080" />
          <path d="M0 55L240 128" stroke="#5ccaff" opacity="0.150" />
          <path d="M0 540L228 515V728H0z" fill="#10c0ff" opacity="0.120" />
        </svg>
        <div className="relative"><DesktopIcons /></div>
        <Explorer />
        <PropertiesDialog />
      </div>
      <Taskbar />
    </div>
  );
}
